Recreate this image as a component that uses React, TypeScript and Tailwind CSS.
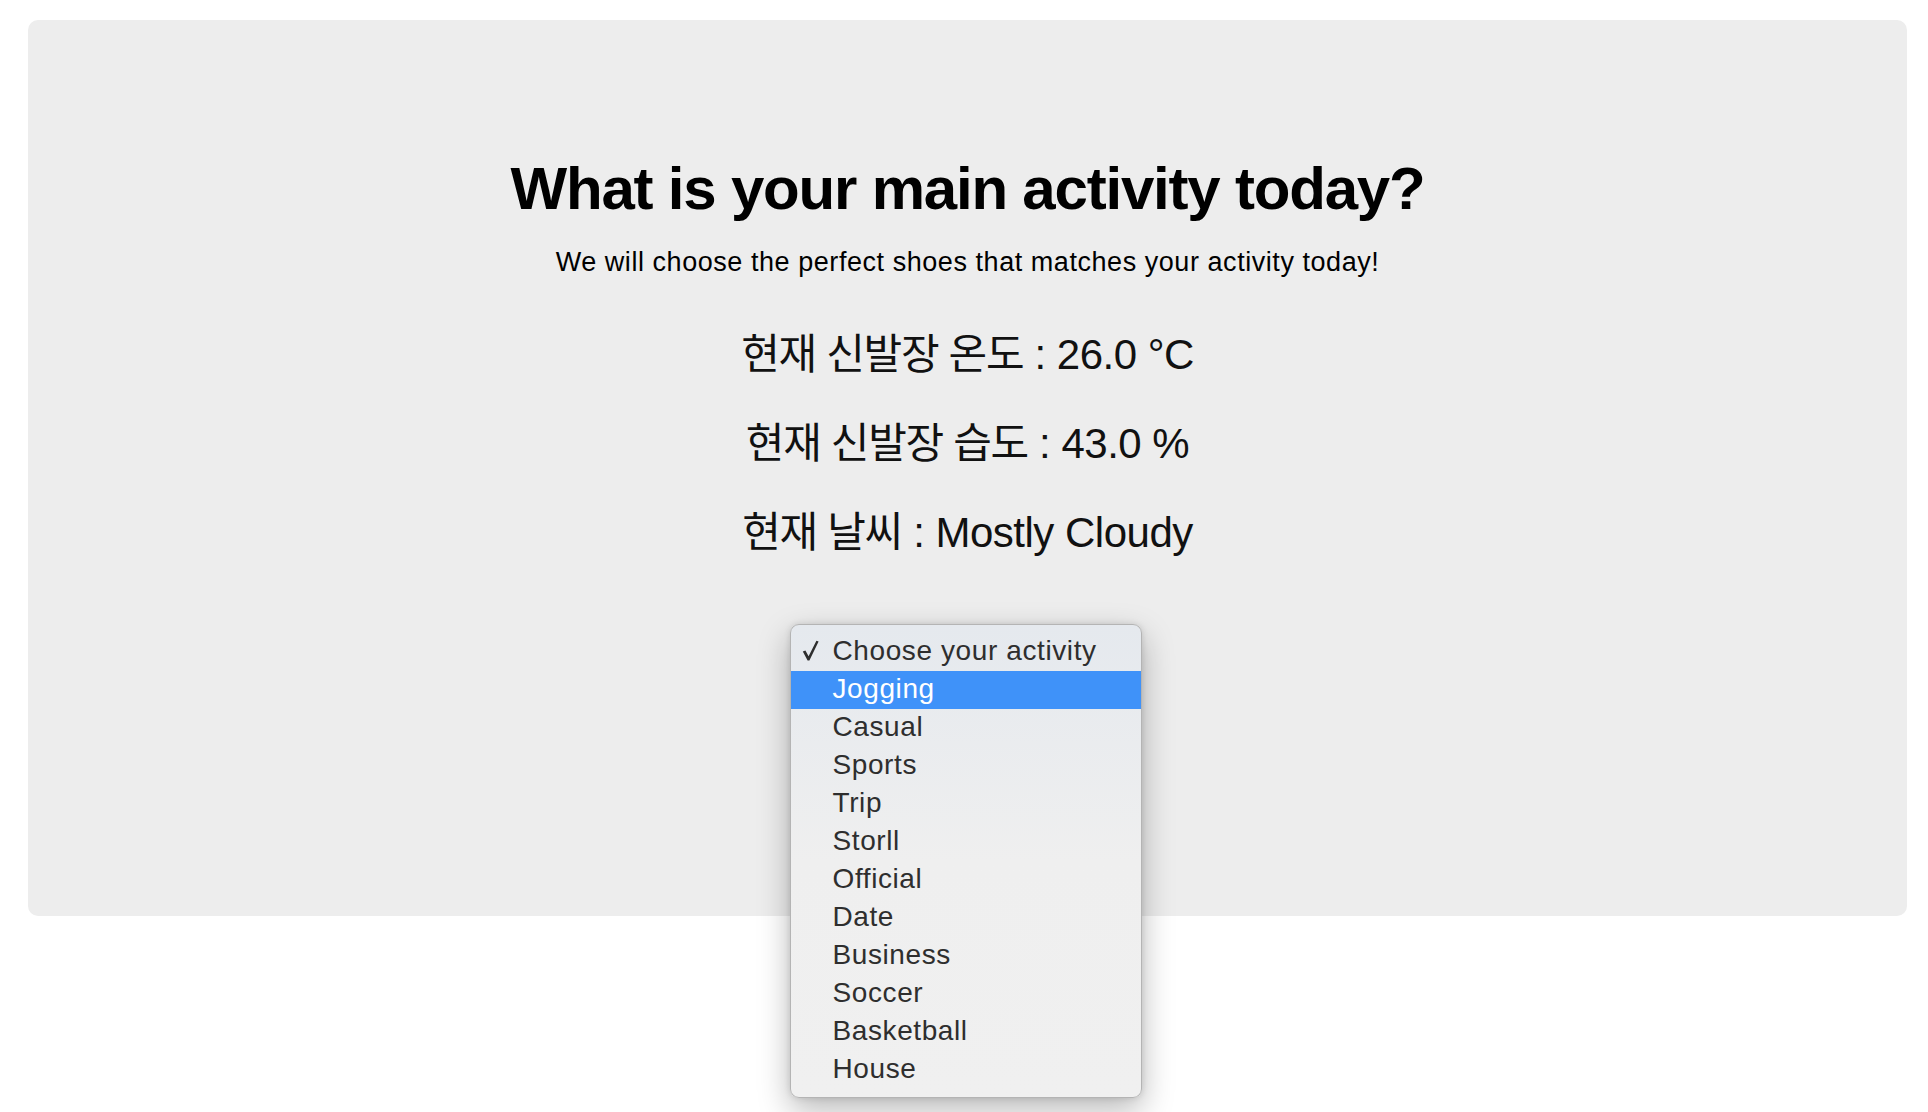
const activities = [
  "Jogging",
  "Casual",
  "Sports",
  "Trip",
  "Storll",
  "Official",
  "Date",
  "Business",
  "Soccer",
  "Basketball",
  "House",
];

const stats = [
  { label: "현재 신발장 온도", value: "26.0 °C" },
  { label: "현재 신발장 습도", value: "43.0 %" },
  { label: "현재 날씨", value: "Mostly Cloudy" },
];

function CheckMark() {
  return (
    <svg width="17" height="21" viewBox="0 0 17 21" className="shrink-0">
      <path d="M0.8 11.6 L3.4 10.4 L6.6 16.2 L14.4 0.8 L16.6 1.6 L7.4 20.4 L5.6 20.4 Z" fill="#2e2e2e" />
    </svg>
  );
}

function ActivityMenu() {
  return (
    <div className="absolute left-[-2px] top-[-8px] w-[352px] rounded-[9px] border border-[#b4b4b4] bg-gradient-to-b from-[#e5e9ee] via-[#efefef] to-[#f0f0f0] py-[8px] shadow-[0_12px_32px_rgba(0,0,0,0.28),0_0_6px_rgba(0,0,0,0.12)]">
      <div className="flex h-[38px] items-center pb-[3px] pl-[11px] text-[#2e2e2e]">
        <CheckMark />
        <span className="ml-[14px]">Choose your activity</span>
      </div>
      {activities.map((a, i) => (
        <div
          key={a}
          className={
            i === 0
              ? "flex h-[38px] items-center bg-[#3f92f9] pb-[3px] pl-[42px] text-white"
              : "flex h-[38px] items-center pb-[3px] pl-[42px] text-[#2e2e2e]"
          }
        >
          {a}
        </div>
      ))}
    </div>
  );
}

export default function App() {
  return (
    <div className="min-h-[1112px] bg-white pt-[20px] font-['Liberation_Sans','Noto_Sans_CJK_KR',sans-serif]">
      <div className="ml-[28px] mr-[21px] h-[896px] rounded-[10px] bg-[#ededed] pt-[133px] text-center">
        <h1 className="text-[60px] font-bold leading-[72px] tracking-[-1.2px] text-black">
          What is your main activity today?
        </h1>
        <p className="mt-[19px] text-[27px] leading-[36px] tracking-[0.55px] text-black">
          We will choose the perfect shoes that matches your activity today!
        </p>

        <div className="mt-[30px]">
          {stats.map((s) => (
            <div key={s.label} className="text-[42px] leading-[89px] tracking-[-0.5px] text-[#111]">
              <span className="tracking-[-1.3px]">{s.label}</span> : {s.value}
            </div>
          ))}
        </div>

        {/* native select popup, opened */}
        <div className="relative mx-auto mt-[55px] h-[38px] w-[352px] text-left text-[28px] leading-[38px] tracking-[0.6px]">
          <ActivityMenu />
        </div>
      </div>
    </div>
  );
}
